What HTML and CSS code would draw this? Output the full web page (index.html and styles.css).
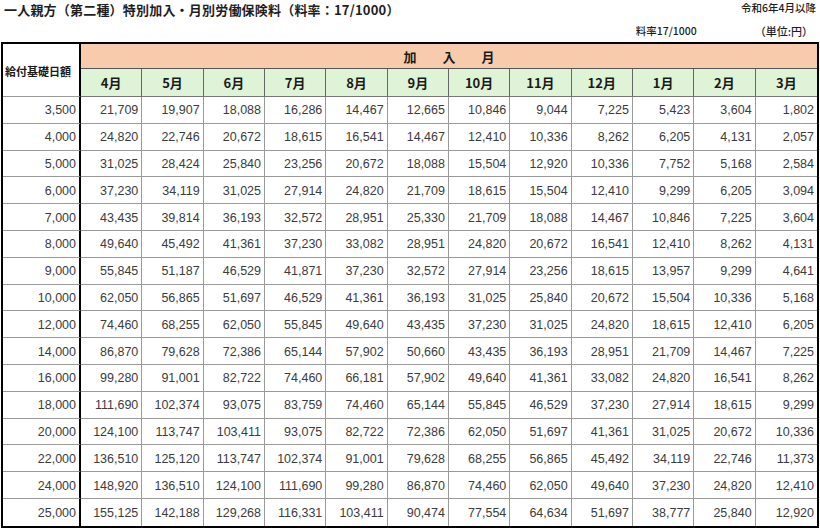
FILE: index.html
```html
<!DOCTYPE html>
<html lang="ja">
<head>
<meta charset="utf-8">
<title>一人親方（第二種）特別加入・月別労働保険料</title>
<link rel="stylesheet" href="styles.css">
</head>
<body>
<div class="head">
  <h1 class="title">一人親方（第二種）特別加入・月別労働保険料（料率：17/1000）</h1>
  <div class="era">令和6年4月以降</div>
</div>
<div class="sub"><span class="rate">料率17/1000</span><span class="unit">（単位:円）</span></div>
<table class="fee">
  <colgroup><col class="c-base"><col span="12"></colgroup>
  <thead>
    <tr class="h1"><th class="base-h" rowspan="2">給付基礎日額</th><th class="join" colspan="12">加　　入　　月</th></tr>
    <tr class="h2"><th>4月</th><th>5月</th><th>6月</th><th>7月</th><th>8月</th><th>9月</th><th>10月</th><th>11月</th><th>12月</th><th>1月</th><th>2月</th><th class="last">3月</th></tr>
  </thead>
  <tbody>
    <tr><td class="base">3,500</td><td>21,709</td><td>19,907</td><td>18,088</td><td>16,286</td><td>14,467</td><td>12,665</td><td>10,846</td><td>9,044</td><td>7,225</td><td>5,423</td><td>3,604</td><td>1,802</td></tr>
    <tr><td class="base">4,000</td><td>24,820</td><td>22,746</td><td>20,672</td><td>18,615</td><td>16,541</td><td>14,467</td><td>12,410</td><td>10,336</td><td>8,262</td><td>6,205</td><td>4,131</td><td>2,057</td></tr>
    <tr><td class="base">5,000</td><td>31,025</td><td>28,424</td><td>25,840</td><td>23,256</td><td>20,672</td><td>18,088</td><td>15,504</td><td>12,920</td><td>10,336</td><td>7,752</td><td>5,168</td><td>2,584</td></tr>
    <tr><td class="base">6,000</td><td>37,230</td><td>34,119</td><td>31,025</td><td>27,914</td><td>24,820</td><td>21,709</td><td>18,615</td><td>15,504</td><td>12,410</td><td>9,299</td><td>6,205</td><td>3,094</td></tr>
    <tr><td class="base">7,000</td><td>43,435</td><td>39,814</td><td>36,193</td><td>32,572</td><td>28,951</td><td>25,330</td><td>21,709</td><td>18,088</td><td>14,467</td><td>10,846</td><td>7,225</td><td>3,604</td></tr>
    <tr><td class="base">8,000</td><td>49,640</td><td>45,492</td><td>41,361</td><td>37,230</td><td>33,082</td><td>28,951</td><td>24,820</td><td>20,672</td><td>16,541</td><td>12,410</td><td>8,262</td><td>4,131</td></tr>
    <tr><td class="base">9,000</td><td>55,845</td><td>51,187</td><td>46,529</td><td>41,871</td><td>37,230</td><td>32,572</td><td>27,914</td><td>23,256</td><td>18,615</td><td>13,957</td><td>9,299</td><td>4,641</td></tr>
    <tr><td class="base">10,000</td><td>62,050</td><td>56,865</td><td>51,697</td><td>46,529</td><td>41,361</td><td>36,193</td><td>31,025</td><td>25,840</td><td>20,672</td><td>15,504</td><td>10,336</td><td>5,168</td></tr>
    <tr><td class="base">12,000</td><td>74,460</td><td>68,255</td><td>62,050</td><td>55,845</td><td>49,640</td><td>43,435</td><td>37,230</td><td>31,025</td><td>24,820</td><td>18,615</td><td>12,410</td><td>6,205</td></tr>
    <tr><td class="base">14,000</td><td>86,870</td><td>79,628</td><td>72,386</td><td>65,144</td><td>57,902</td><td>50,660</td><td>43,435</td><td>36,193</td><td>28,951</td><td>21,709</td><td>14,467</td><td>7,225</td></tr>
    <tr><td class="base">16,000</td><td>99,280</td><td>91,001</td><td>82,722</td><td>74,460</td><td>66,181</td><td>57,902</td><td>49,640</td><td>41,361</td><td>33,082</td><td>24,820</td><td>16,541</td><td>8,262</td></tr>
    <tr><td class="base">18,000</td><td>111,690</td><td>102,374</td><td>93,075</td><td>83,759</td><td>74,460</td><td>65,144</td><td>55,845</td><td>46,529</td><td>37,230</td><td>27,914</td><td>18,615</td><td>9,299</td></tr>
    <tr><td class="base">20,000</td><td>124,100</td><td>113,747</td><td>103,411</td><td>93,075</td><td>82,722</td><td>72,386</td><td>62,050</td><td>51,697</td><td>41,361</td><td>31,025</td><td>20,672</td><td>10,336</td></tr>
    <tr><td class="base">22,000</td><td>136,510</td><td>125,120</td><td>113,747</td><td>102,374</td><td>91,001</td><td>79,628</td><td>68,255</td><td>56,865</td><td>45,492</td><td>34,119</td><td>22,746</td><td>11,373</td></tr>
    <tr><td class="base">24,000</td><td>148,920</td><td>136,510</td><td>124,100</td><td>111,690</td><td>99,280</td><td>86,870</td><td>74,460</td><td>62,050</td><td>49,640</td><td>37,230</td><td>24,820</td><td>12,410</td></tr>
    <tr class="end"><td class="base">25,000</td><td>155,125</td><td>142,188</td><td>129,268</td><td>116,331</td><td>103,411</td><td>90,474</td><td>77,554</td><td>64,634</td><td>51,697</td><td>38,777</td><td>25,840</td><td>12,920</td></tr>
  </tbody>
</table>
</body>
</html>
```

FILE: styles.css
```css
* {
  box-sizing: border-box;
  margin: 0;
  padding: 0;
}

html, body {
  background: #ffffff;
}

body {
  width: 820px;
  height: 529px;
  overflow: hidden;
  font-family: "Noto Sans CJK JP", "Liberation Sans", sans-serif;
  color: #1e1e1e;
}

.head {
  display: flex;
  justify-content: space-between;
  align-items: flex-start;
  height: 20px;
}

.title {
  font-size: 13px;
  font-weight: 700;
  line-height: 20px;
  padding-left: 4px;
  letter-spacing: 0.2px;
}

.era {
  font-size: 10.5px;
  line-height: 16px;
  padding-right: 4px;
  font-weight: 500;
}

.sub {
  display: flex;
  justify-content: flex-end;
  gap: 58px;
  height: 22px;
  line-height: 22px;
  font-size: 10.5px;
  padding-right: 7px;
  font-weight: 500;
}

.unit {
  font-size: 11px;
}

.fee {
  margin-left: 1px;
  width: 818px;
  table-layout: fixed;
  border: 2px solid #000;
  border-spacing: 0;
}

.c-base {
  width: 78px;
}

.fee th,
.fee td {
  border-right: 1px solid #9a9a9a;
  border-bottom: 1px solid #9a9a9a;
}

.fee th {
  font-weight: 700;
  color: #1a1a1a;
  text-align: center;
  vertical-align: middle;
}

.fee .base-h {
  background: #ffffff;
  border-right: 2px solid #000;
  text-align: left;
  font-size: 11px;
  padding-left: 2px;
  padding-top: 2px;
}

.fee .h1 th.join {
  height: 25px;
  background: #f8cbad;
  font-size: 13px;
  border-right: 0;
  border-bottom: 1px solid #555;
  padding-top: 1px;
}

.fee .h2 th {
  height: 28px;
  background: #dff3d6;
  font-size: 13px;
  border-right: 1px solid #666;
  border-bottom: 1px solid #777;
}

.fee .h2 th.last,
.fee td:last-child {
  border-right: 0;
}

.fee td {
  height: 26.8px;
  font-family: "Liberation Sans", Arial, sans-serif;
  font-size: 12.5px;
  color: #3c3c3c;
  text-align: right;
  padding-right: 3px;
  padding-top: 1px;
  vertical-align: middle;
  white-space: nowrap;
}

.fee td.base {
  border-right: 2px solid #000;
}

.fee tr.end td {
  border-bottom: 0;
}
```
